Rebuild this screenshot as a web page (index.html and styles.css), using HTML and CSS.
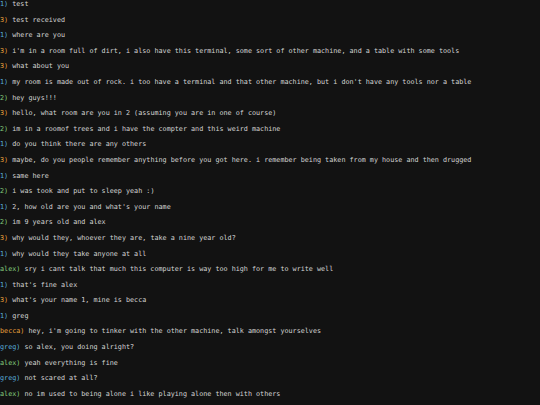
FILE: index.html
```html
<!DOCTYPE html>
<html>
<head>
<meta charset="utf-8">
<link rel="stylesheet" href="styles.css">
</head>
<body>
<div class="log">
<div class="line"><span class="p1">1)</span> test</div>
<div class="line"><span class="p3">3)</span> test received</div>
<div class="line"><span class="p1">1)</span> where are you</div>
<div class="line"><span class="p3">3)</span> i'm in a room full of dirt, i also have this terminal, some sort of other machine, and a table with some tools</div>
<div class="line"><span class="p3">3)</span> what about you</div>
<div class="line"><span class="p1">1)</span> my room is made out of rock. i too have a terminal and that other machine, but i don't have any tools nor a table</div>
<div class="line"><span class="p2">2)</span> hey guys!!!</div>
<div class="line"><span class="p3">3)</span> hello, what room are you in 2 (assuming you are in one of course)</div>
<div class="line"><span class="p2">2)</span> im in a roomof trees and i have the compter and this weird machine</div>
<div class="line"><span class="p1">1)</span> do you think there are any others</div>
<div class="line"><span class="p3">3)</span> maybe, do you people remember anything before you got here. i remember being taken from my house and then drugged</div>
<div class="line"><span class="p1">1)</span> same here</div>
<div class="line"><span class="p2">2)</span> i was took and put to sleep yeah :)</div>
<div class="line"><span class="p1">1)</span> 2, how old are you and what's your name</div>
<div class="line"><span class="p2">2)</span> im 9 years old and alex</div>
<div class="line"><span class="p3">3)</span> why would they, whoever they are, take a nine year old?</div>
<div class="line"><span class="p1">1)</span> why would they take anyone at all</div>
<div class="line"><span class="p2">alex)</span> sry i cant talk that much this computer is way too high for me to write well</div>
<div class="line"><span class="p1">1)</span> that's fine alex</div>
<div class="line"><span class="p3">3)</span> what's your name 1, mine is becca</div>
<div class="line"><span class="p1">1)</span> greg</div>
<div class="line"><span class="p3">becca)</span> hey, i'm going to tinker with the other machine, talk amongst yourselves</div>
<div class="line"><span class="p1">greg)</span> so alex, you doing alright?</div>
<div class="line"><span class="p2">alex)</span> yeah everything is fine</div>
<div class="line"><span class="p1">greg)</span> not scared at all?</div>
<div class="line"><span class="p2">alex)</span> no im used to being alone i like playing alone then with others</div>
</div>
</body>
</html>
```
FILE: styles.css
```css
html, body {
  margin: 0;
  padding: 0;
  background: #121212;
}
body {
  overflow: hidden;
}
.log {
  margin-top: -3px;
  padding-left: 0;
  font-family: "DejaVu Sans Mono", monospace;
  font-size: 6.75px;
  line-height: 15.6px;
  color: #d4d4d4;
}
.line {
  white-space: pre;
}
.p1 { color: #5aaedc; }
.p2 { color: #86cf7e; }
.p3 { color: #e8a03c; }
```
